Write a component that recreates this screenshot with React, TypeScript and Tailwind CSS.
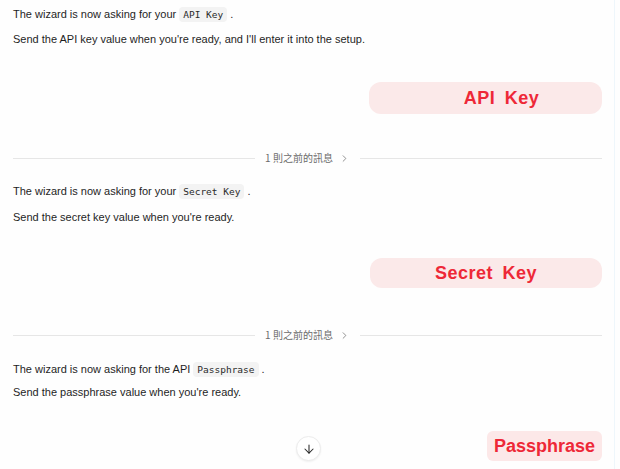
import React from "react";
import { ArrowDown, ChevronRight } from "lucide-react";

function Code({ children }: { children: React.ReactNode }) {
    return (
        <code className="mx-[3px] rounded-[4px] bg-[#f3f3f3] px-[4px] py-[2px] text-[9.5px] text-[#2a2a2a] [font-family:'DejaVu_Sans_Mono',monospace]">
            {children}
        </code>
    );
}

function Earlier() {
    return (
        <div className="flex items-center gap-[10px] pl-[13px] pr-[18px]">
            <div className="h-px flex-1 bg-[#e6e6e6]" />
            <div className="flex items-center gap-[6px] text-[10px] leading-[14px] text-[#6b6b6b] [font-family:'Noto_Sans_CJK_TC',sans-serif]">
                <span>1 則之前的訊息</span>
                <ChevronRight className="h-[11px] w-[11px]" strokeWidth={1.6} />
            </div>
            <div className="h-px flex-1 bg-[#e6e6e6]" />
        </div>
    );
}

function Bubble({ text, className }: { text: string; className: string }) {
    return (
        <div className="flex justify-end px-[18px]">
            <div className={"flex items-center justify-center text-[18px] font-bold text-[#ee2837] " + className}>
                {text}
            </div>
        </div>
    );
}

export default function App() {
    return (
        <div className="relative h-[469px] w-[620px] overflow-hidden bg-[#fefefe] text-[11px] text-[#1e1e1e] [font-family:'Liberation_Sans',Arial,sans-serif]">
            <div className="absolute right-[5px] top-0 h-full w-px bg-[#eef6fb]" />

            <div className="px-[13px] pt-[6px]">
                <p className="leading-[16px]">
                    The wizard is now asking for your<Code>API Key</Code>.
                </p>
                <p className="mt-[8px] leading-[16px]">
                    Send the API key value when you're ready, and I'll enter it into the setup.
                </p>
            </div>

            <div className="mt-[35px]">
                <Bubble
                    text="API Key"
                    className="h-[32px] w-[233px] rounded-[12px] bg-[#fbe9e9] pl-[32px] tracking-[0.5px] [word-spacing:4px]"
                />
            </div>

            <div className="mt-[37px]">
                <Earlier />
            </div>

            <div className="px-[13px] pt-[18px]">
                <p className="leading-[16px]">
                    The wizard is now asking for your<Code>Secret Key</Code>.
                </p>
                <p className="mt-[9px] leading-[16px]">
                    Send the secret key value when you're ready.
                </p>
            </div>

            <div className="mt-[33px]">
                <Bubble
                    text="Secret Key"
                    className="h-[30px] w-[232px] rounded-[12px] bg-[#fbe9e9] tracking-[0.5px] [word-spacing:4px]"
                />
            </div>

            <div className="mt-[40px]">
                <Earlier />
            </div>

            <div className="px-[13px] pt-[19px]">
                <p className="leading-[16px]">
                    The wizard is now asking for the API<Code>Passphrase</Code>.
                </p>
                <p className="mt-[6px] leading-[16px]">
                    Send the passphrase value when you're ready.
                </p>
            </div>

            <div className="mt-[31px]">
                <Bubble text="Passphrase" className="h-[30px] rounded-[6px] bg-[#fce8e8] px-[7px]" />
            </div>

            <button className="absolute left-[296px] top-[436px] flex h-[25px] w-[25px] items-center justify-center rounded-full border border-[#ececec] bg-white shadow-[0_1px_2px_rgba(0,0,0,0.06)]">
                <ArrowDown className="h-[14px] w-[14px] text-[#2a2a2a]" strokeWidth={1.8} />
            </button>
        </div>
    );
}
